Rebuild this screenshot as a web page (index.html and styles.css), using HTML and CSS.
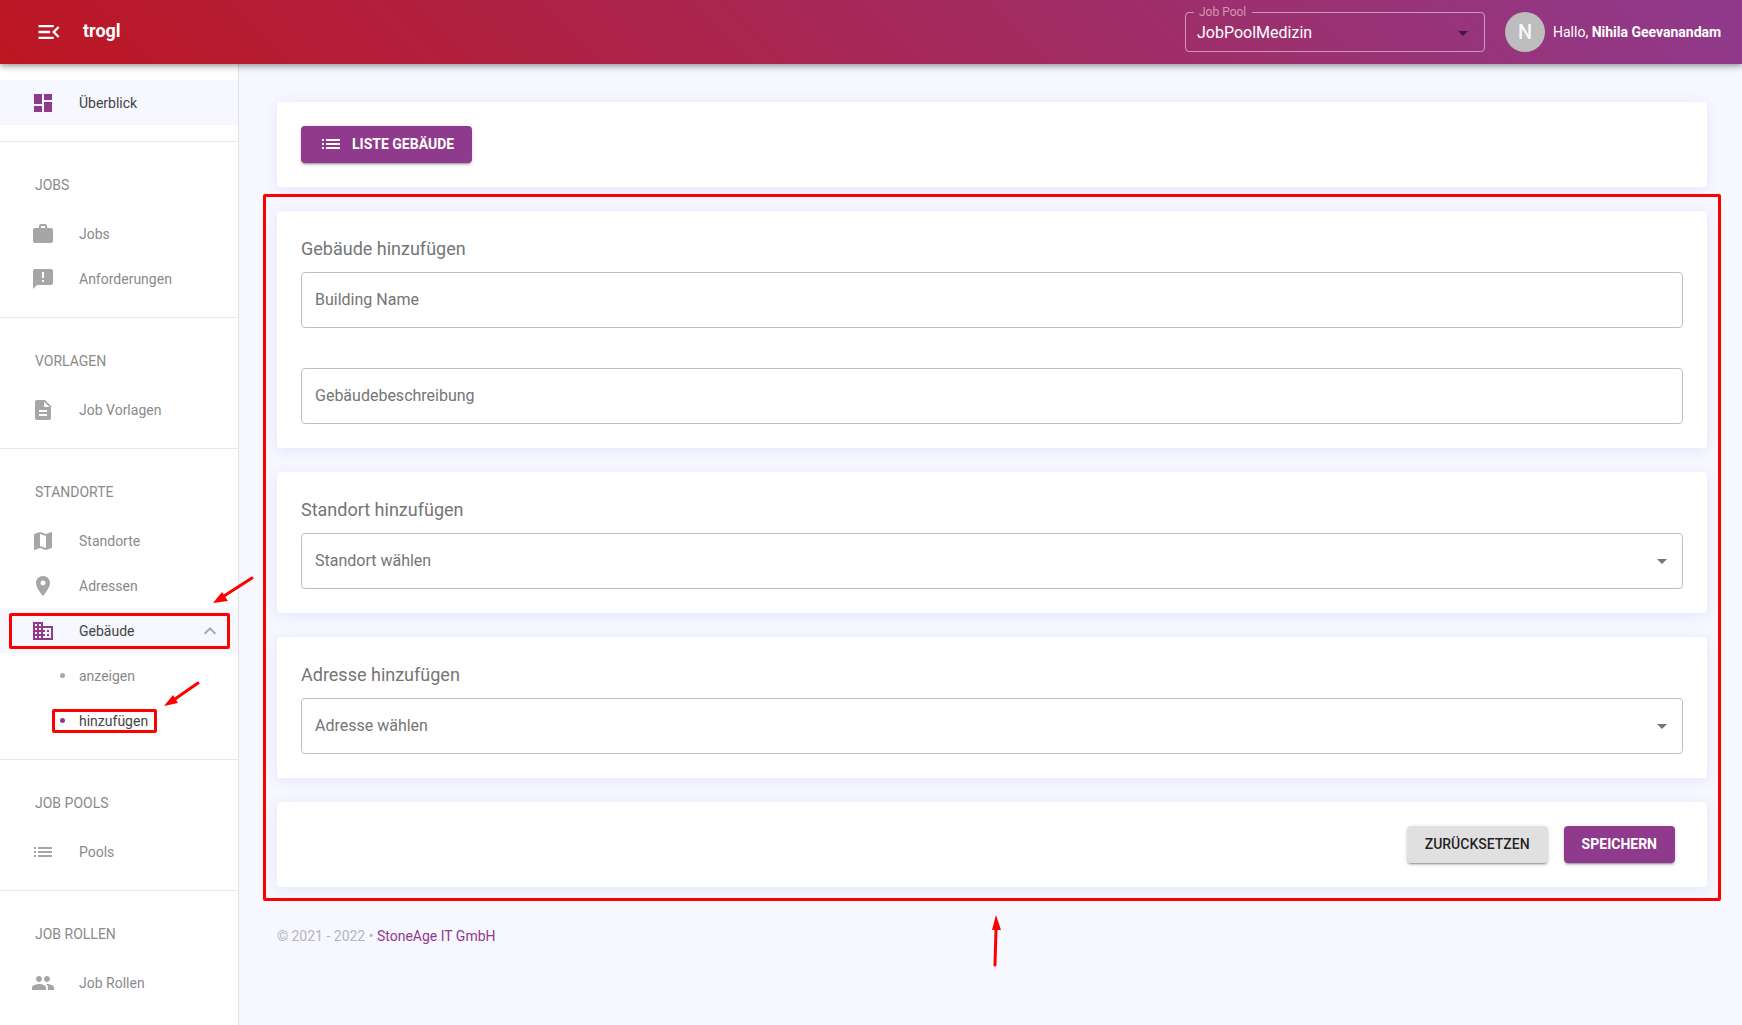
FILE: index.html
```html
<!DOCTYPE html>
<html lang="de">
<head>
<meta charset="utf-8">
<meta name="viewport" content="width=device-width, initial-scale=1">
<title>trogl – Gebäude hinzufügen</title>
<link rel="stylesheet" href="styles.css">
</head>
<body>
<header class="topbar">
  <button class="menu-toggle" type="button" aria-label="Menü einklappen">
    <svg class="menu-icon" viewBox="0 0 24 24"><path d="M3 18h13v-2H3v2zM3 6v2h13V6H3zm0 7h10v-2H3v2zm18 2.59L17.42 12 21 8.41 19.59 7l-5 5 5 5L21 15.59z"/></svg>
  </button>
  <span class="brand">trogl</span>
  <fieldset class="pool">
    <legend class="pool-legend"><label for="pool">Job Pool</label></legend>
    <select id="pool" class="pool-select"><option>JobPoolMedizin</option></select>
    <svg class="caret" viewBox="0 0 24 24"><path d="M7 10l5 5 5-5z"/></svg>
  </fieldset>
  <div class="user">
    <span class="avatar">N</span>
    <span class="greeting">Hallo, <b>Nihila Geevanandam</b></span>
  </div>
</header>

<div class="layout">
  <nav class="sidebar">
    <section class="group">
      <a class="item active" href="#"><svg class="icon" viewBox="0 0 24 24"><path d="M3 13h8V3H3v10zm0 8h8v-6H3v6zm10 0h8V11h-8v10zm0-18v6h8V3h-8z"/></svg>Überblick</a>
    </section>
    <section class="group">
      <h2 class="group-title">JOBS</h2>
      <a class="item" href="#"><svg class="icon" viewBox="0 0 24 24"><path d="M20 6h-4V4c0-1.11-.89-2-2-2h-4c-1.11 0-2 .89-2 2v2H4c-1.11 0-2 .89-2 2v11c0 1.11.89 2 2 2h16c1.11 0 2-.89 2-2V8c0-1.11-.89-2-2-2zm-6 0h-4V4h4v2z"/></svg>Jobs</a>
      <a class="item" href="#"><svg class="icon" viewBox="0 0 24 24"><path d="M20 2H4c-1.1 0-2 .9-2 2v18l4-4h14c1.1 0 2-.9 2-2V4c0-1.1-.9-2-2-2zm-7 13h-2v-2h2v2zm0-4h-2V5h2v6z"/></svg>Anforderungen</a>
    </section>
    <section class="group">
      <h2 class="group-title">VORLAGEN</h2>
      <a class="item" href="#"><svg class="icon" viewBox="0 0 24 24"><path d="M14 2H6c-1.1 0-2 .9-2 2v16c0 1.1.9 2 2 2h12c1.1 0 2-.9 2-2V8l-6-6zm2 16H8v-2h8v2zm0-4H8v-2h8v2zm-3-5V3.500L18.500 9H13z"/></svg>Job Vorlagen</a>
    </section>
    <section class="group">
      <h2 class="group-title">STANDORTE</h2>
      <a class="item" href="#"><svg class="icon" viewBox="0 0 24 24"><path d="M20.500 3l-.16.03L15 5.100 9 3 3.360 4.900c-.21.07-.36.25-.36.480V20.500c0 .28.22.5.5.5l.16-.03L9 18.900l6 2.100 5.640-1.900c.21-.07.36-.25.36-.480V3.500c0-.28-.22-.5-.5-.5zM15 19l-6-2.110V5l6 2.110V19z"/></svg>Standorte</a>
      <a class="item" href="#"><svg class="icon" viewBox="0 0 24 24"><path d="M12 2C8.130 2 5 5.130 5 9c0 5.250 7 13 7 13s7-7.750 7-13c0-3.870-3.130-7-7-7zm0 9.500c-1.380 0-2.500-1.120-2.500-2.500s1.120-2.500 2.500-2.500 2.500 1.120 2.500 2.500-1.120 2.500-2.500 2.500z"/></svg>Adressen</a>
      <button class="item active marked" type="button" aria-expanded="true"><svg class="icon" viewBox="0 0 24 24"><path d="M12 7V3H2v18h20V7H12zM6 19H4v-2h2v2zm0-4H4v-2h2v2zm0-4H4V9h2v2zm0-4H4V5h2v2zm4 12H8v-2h2v2zm0-4H8v-2h2v2zm0-4H8V9h2v2zm0-4H8V5h2v2zm10 12h-8v-2h2v-2h-2v-2h2v-2h-2V9h8v10zm-2-8h-2v2h2v-2zm0 4h-2v2h2v-2z"/></svg>Gebäude<svg class="chevron" viewBox="0 0 24 24"><path d="M12 8l-6 6 1.410 1.410L12 10.830l4.590 4.580L18 14z"/></svg>
        <svg class="arrow arrow-parent" viewBox="0 0 42 30"><path class="shaft" d="M40 3L12 21"/><path d="M1 28L10 17L16 26z"/></svg>
      </button>
      <a class="item sub" href="#"><span class="dot"></span>anzeigen</a>
      <a class="item sub current" href="#"><span class="dot"></span><span class="marked-text">hinzufügen</span>
        <svg class="arrow arrow-child" viewBox="0 0 42 30"><path class="shaft" d="M35 4L12 20"/><path d="M1 27L10 16L15 24z"/></svg>
      </a>
    </section>
    <section class="group">
      <h2 class="group-title">JOB POOLS</h2>
      <a class="item" href="#"><svg class="icon" viewBox="0 0 24 24"><path d="M3 13h2v-2H3v2zm0 4h2v-2H3v2zm0-8h2V7H3v2zm4 4h14v-2H7v2zm0 4h14v-2H7v2zM7 7v2h14V7H7z"/></svg>Pools</a>
    </section>
    <section class="group">
      <h2 class="group-title">JOB ROLLEN</h2>
      <a class="item" href="#"><svg class="icon" viewBox="0 0 24 24"><path d="M16 11c1.660 0 2.990-1.340 2.990-3S17.660 5 16 5s-3 1.340-3 3 1.340 3 3 3zm-8 0c1.660 0 2.990-1.340 2.990-3S9.660 5 8 5 5 6.340 5 8s1.340 3 3 3zm0 2c-2.330 0-7 1.170-7 3.500V19h14v-2.500c0-2.330-4.670-3.500-7-3.500zm8 0c-.29 0-.62.02-.97.05 1.160.84 1.970 1.970 1.970 3.450V19h6v-2.500c0-2.330-4.670-3.500-7-3.500z"/></svg>Job Rollen</a>
    </section>
  </nav>

  <main class="content">
    <div class="card">
      <button class="btn primary with-icon" type="button"><svg class="icon" viewBox="0 0 24 24"><path d="M3 13h2v-2H3v2zm0 4h2v-2H3v2zm0-8h2V7H3v2zm4 4h14v-2H7v2zm0 4h14v-2H7v2zM7 7v2h14V7H7z"/></svg>LISTE GEBÄUDE</button>
    </div>
    <form class="form">
      <section class="card">
        <h1 class="card-title">Gebäude hinzufügen</h1>
        <div class="fields">
          <input class="field" type="text" placeholder="Building Name" aria-label="Building Name">
          <input class="field" type="text" placeholder="Gebäudebeschreibung" aria-label="Gebäudebeschreibung">
        </div>
      </section>
      <section class="card">
        <h2 class="card-title"><label for="location">Standort hinzufügen</label></h2>
        <div class="select-box">
          <select id="location" class="field"><option>Standort wählen</option></select>
          <svg class="caret" viewBox="0 0 24 24"><path d="M7 10l5 5 5-5z"/></svg>
        </div>
      </section>
      <section class="card">
        <h2 class="card-title"><label for="address">Adresse hinzufügen</label></h2>
        <div class="select-box">
          <select id="address" class="field"><option>Adresse wählen</option></select>
          <svg class="caret" viewBox="0 0 24 24"><path d="M7 10l5 5 5-5z"/></svg>
        </div>
      </section>
      <div class="card actions">
        <button class="btn" type="reset">ZURÜCKSETZEN</button>
        <button class="btn primary" type="button">SPEICHERN</button>
      </div>
      <svg class="arrow arrow-form" viewBox="0 0 12 52"><path class="shaft" d="M5 50L6 14"/><path d="M6 0L11 15L2 15z"/></svg>
    </form>
    <footer class="footer">© 2021 - 2022 • <a href="#">StoneAge IT GmbH</a></footer>
  </main>
</div>
</body>
</html>
```
FILE: styles.css
```css
* { box-sizing: border-box; }

:root {
  --primary: #8f3a8d;
  --page: #f6f7ff;
  --mark: #ff0000;
}

body {
  margin: 0;
  min-height: 100vh;
  display: flex;
  flex-direction: column;
  background: var(--page);
  color: #757575;
  font-family: Roboto, "Liberation Sans", sans-serif;
  font-size: 14px;
  line-height: 20px;
}

button, input, select { font: inherit; color: inherit; }
a { color: inherit; text-decoration: none; }
svg { fill: currentColor; flex: none; }

/* Top bar */
.topbar {
  position: sticky;
  top: 0;
  z-index: 2;
  height: 64px;
  padding: 0 17px 0 35px;
  display: flex;
  align-items: center;
  color: #fff;
  background: linear-gradient(45deg, #be1622, #8f3a8d);
  box-shadow: 0 2px 4px -1px rgba(0, 0, 0, .2), 0 4px 5px rgba(0, 0, 0, .14), 0 1px 10px rgba(0, 0, 0, .12);
}

.menu-toggle {
  display: flex;
  padding: 0;
  border: 0;
  background: none;
  cursor: pointer;
}

.menu-icon { width: 28px; height: 28px; }

.brand {
  margin-left: 20px;
  padding-bottom: 2px;
  font-size: 18px;
  font-weight: 700;
}

.pool {
  position: relative;
  width: 300px;
  height: 46px;
  margin: 0 20px 6px auto;
  padding: 0;
  border: 1px solid rgba(255, 255, 255, .5);
  border-radius: 4px;
}

.pool-legend {
  margin-left: 8px;
  padding: 0 6px 0 5px;
  color: rgba(255, 255, 255, .5);
  font-size: 12px;
  line-height: 12px;
}

.pool-select {
  display: block;
  width: 100%;
  height: 30px;
  padding: 0 32px 0 11px;
  border: 0;
  background: none;
  appearance: none;
  font-size: 16px;
}

.caret {
  position: absolute;
  right: 9px;
  top: 50%;
  width: 24px;
  height: 24px;
  margin-top: -12px;
  pointer-events: none;
}

.pool .caret { margin-top: -14px; color: rgba(0, 0, 0, .54); }

.user { display: flex; align-items: center; gap: 8px; }
.greeting { min-width: 172px; }

.avatar {
  width: 40px;
  height: 40px;
  border-radius: 50%;
  background: #bdbdbd;
  color: var(--page);
  font-size: 20px;
  font-weight: 500;
  line-height: 41px;
  text-align: center;
}

/* Sidebar */
.layout { flex: 1; display: flex; }

.sidebar {
  flex: none;
  width: 239px;
  background: #fff;
  border-right: 1px solid #e0e0e0;
  color: #8a8a8a;
}

.group { padding: 16px 0; }
.group + .group { border-top: 1px solid #e8e8e8; }

.group-title {
  margin: 0;
  padding: 17px 35px 16px;
  font-size: 14px;
  font-weight: 400;
  line-height: 20px;
}

.item {
  position: relative;
  display: flex;
  align-items: center;
  gap: 24px;
  width: 100%;
  height: 45px;
  padding: 0 16px 0 31px;
  border: 0;
  background: none;
  text-align: left;
}

.icon { width: 24px; height: 24px; }
.item .icon, .dot, .chevron { color: #a6a6a6; }
.item.active { background: var(--page); }
.item.active, .item.current { color: #444; }
.item.active .icon, .current .dot { color: var(--primary); }
.chevron { width: 24px; height: 24px; margin-left: auto; }

.item.sub { padding-left: 60px; gap: 14px; }
.dot { width: 5px; height: 5px; border-radius: 50%; background: currentColor; }

/* Main content */
.content {
  flex: 1;
  min-width: 0;
  padding: 38px 35px 38px 38px;
}

.form { position: relative; margin-top: 24px; display: grid; gap: 24px; }

.card {
  padding: 24px;
  border-radius: 4px;
  background: #fff;
  box-shadow: 0 2px 14px rgba(80, 80, 220, .1);
}

.card-title {
  margin: 0 0 10px;
  font-size: 18px;
  font-weight: 400;
  line-height: 27px;
}

.fields { display: grid; gap: 40px; }
.select-box { position: relative; }

.field {
  display: block;
  width: 100%;
  height: 56px;
  padding: 0 13px 2px;
  border: 1px solid #c0c0c0;
  border-radius: 4px;
  background: none;
  appearance: none;
  font-size: 16px;
}

select.field { padding-bottom: 0; }
.field::placeholder { color: #757575; opacity: 1; }

.btn {
  display: inline-flex;
  align-items: center;
  height: 37px;
  padding: 0 18px 2px;
  border: 0;
  border-radius: 4px;
  background: #e0e0e0;
  color: rgba(0, 0, 0, .87);
  font-weight: 500;
  cursor: pointer;
  box-shadow: 0 3px 1px -2px rgba(0, 0, 0, .2), 0 2px 2px rgba(0, 0, 0, .14), 0 1px 5px rgba(0, 0, 0, .12);
}

.btn.primary { background: var(--primary); color: #fff; font-weight: 700; }
.with-icon { gap: 9px; }

.card > .btn { display: flex; }

.actions {
  display: flex;
  justify-content: flex-end;
  gap: 16px;
  padding-right: 32px;
}

.footer { margin-top: 39px; color: #b5b5bd; }
.footer a { color: var(--primary); }

/* Red highlights laid over the controls */
.marked::after, .marked-text::after, .form::after {
  content: "";
  position: absolute;
  border: 3px solid var(--mark);
  border-radius: 2px;
  pointer-events: none;
}

.marked::after { inset: 5px 8px 4px 9px; }
.marked-text { position: relative; }
.marked-text::after { inset: -2px -9px -2px -27px; }
.form::after { inset: -17px -14px -14px -14px; }

.arrow { position: absolute; fill: var(--mark); pointer-events: none; }
.shaft { stroke: var(--mark); stroke-width: 3; stroke-linecap: round; }
.arrow-parent { left: 212px; top: -33px; width: 42px; height: 30px; }
.arrow-child { left: 163px; top: -19px; width: 42px; height: 30px; }
.arrow-form { left: 50%; bottom: -80px; width: 12px; height: 52px; margin-left: -2px; }
```
